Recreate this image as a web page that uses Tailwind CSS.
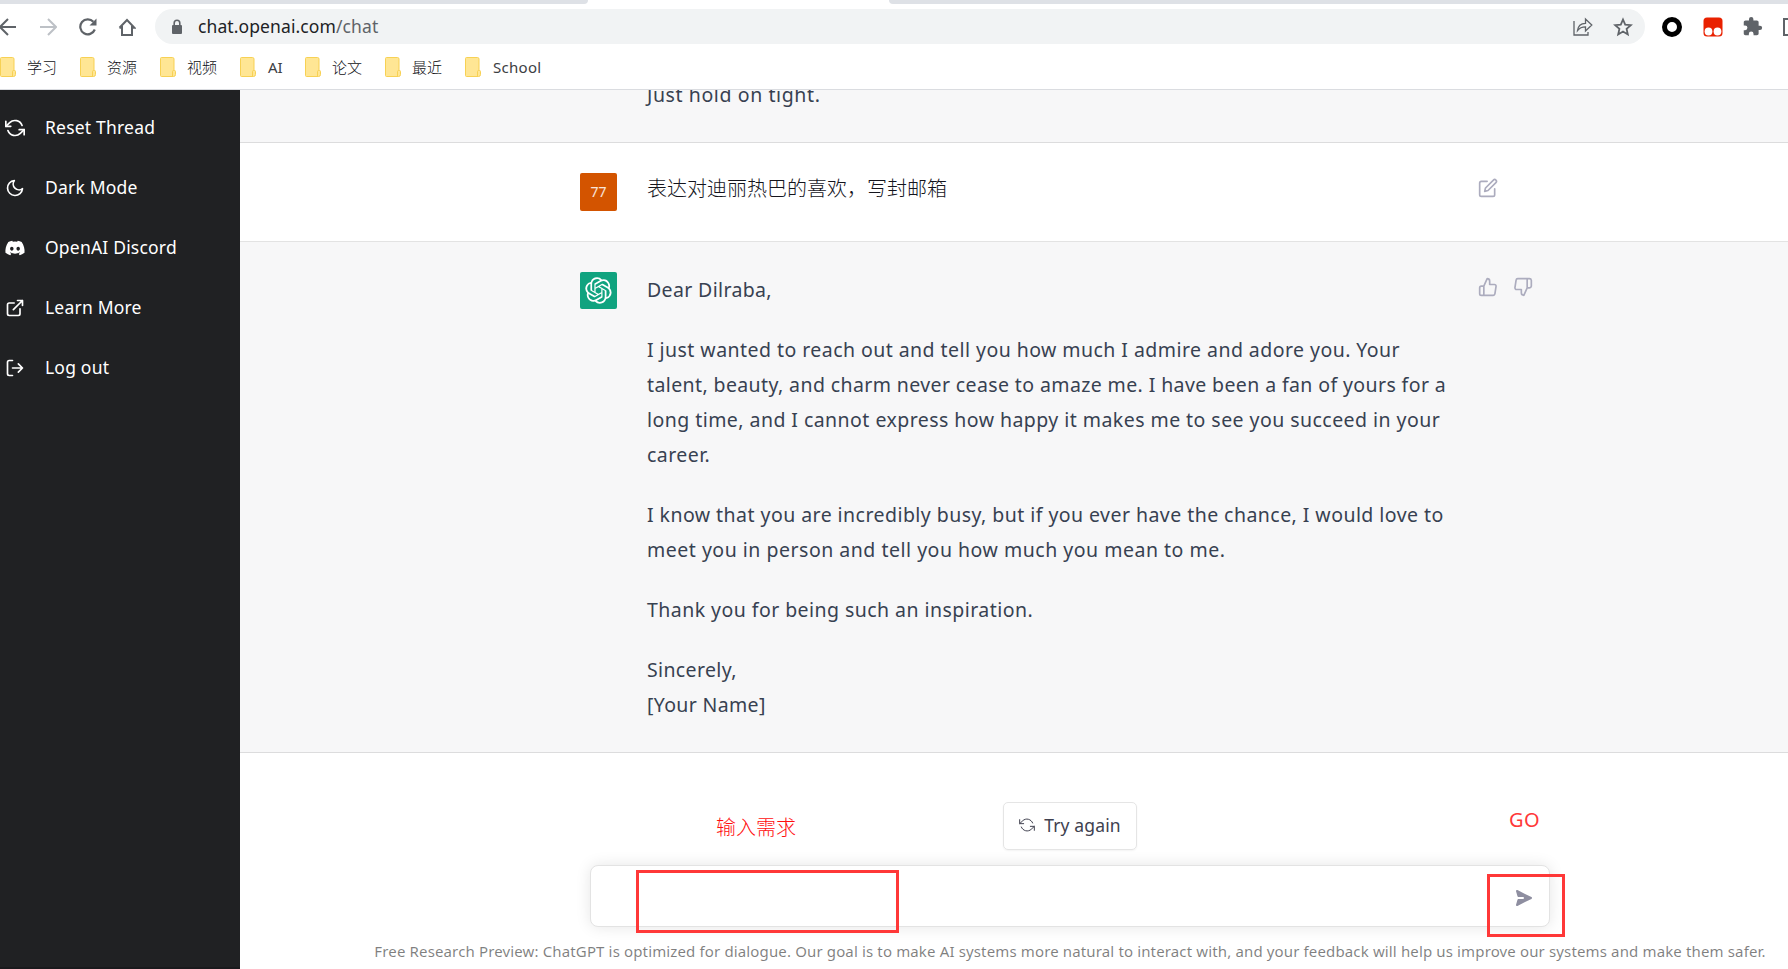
<!doctype html>
<html lang="en">
  <head>
    <meta charset="utf-8" />
    <title>ChatGPT</title>
    <meta name="viewport" content="width=device-width,initial-scale=1" />
    <script src="https://cdn.jsdelivr.net/npm/@tailwindcss/browser@4"></script>
  </head>
  <body class="h-screen overflow-hidden bg-white font-['Noto_Sans','Noto_Sans_CJK_SC',sans-serif]">
    <!-- Icons used more than once -->
    <svg class="hidden">
      <symbol id="refresh" viewBox="0 0 24 24">
        <polyline points="1 4 1 10 7 10" />
        <polyline points="23 20 23 14 17 14" />
        <path d="M20.49 9A9 9 0 0 0 5.64 5.64L1 10m22 4l-4.64 4.36A9 9 0 0 1 3.51 15" />
      </symbol>
      <symbol id="folder" viewBox="0 0 16 20">
        <path d="M1.5 .5h11a1.5 1.5 0 0 1 1.500 1.500v11.500h.5a1 1 0 0 1 1 1v3a2 2 0 0 1-2 2h-12a1 1 0 0 1-1-1v-17a1 1 0 0 1 1-1z" fill="#ffe694" stroke="#f7d154" />
        <path d="M12.500 19v-4.500a1 1 0 0 1 1-1h.5" fill="none" stroke="#f7d154" />
      </symbol>
    </svg>

    <div class="flex h-full flex-col">
      <!-- Browser chrome -->
      <header class="flex h-[90px] shrink-0 flex-col border-b border-[#dadce0]">
        <div class="flex h-1 shrink-0 justify-between">
          <div class="w-[588px] rounded-br-md bg-[#dee1e6]"></div>
          <div class="w-[899px] rounded-bl-md bg-[#dee1e6]"></div>
        </div>
        <div class="mt-[5px] flex h-[35px] shrink-0 items-center">
          <div class="flex w-[155px] shrink-0 items-center">
            <svg class="h-5 w-4" viewBox="0 0 16 20" fill="none" stroke="#5f6368" stroke-width="2"><path d="M16 10H0M8 2L0 10l8 8" /></svg>
            <svg class="ml-[23px] h-5 w-[18px]" viewBox="0 0 18 20" fill="none" stroke="#bdc1c6" stroke-width="2"><path d="M1 10h15M9 2l8 8-8 8" /></svg>
            <svg class="ml-[22px] h-5 w-[18px]" viewBox="0 0 18 20" fill="none" stroke="#5f6368" stroke-width="2.200"><path d="M15.800 12.500A7.500 7.500 0 1 1 14.400 4.800" /><path d="M17.500 1.500v7h-7z" fill="#5f6368" stroke="none" /></svg>
            <svg class="ml-[21px] h-5 w-[18px]" viewBox="0 0 18 20" fill="none" stroke="#5f6368" stroke-width="2"><path d="M4 9v9h10V9M1.500 10.800L9 3l7.500 7.800H14M1.500 10.800H4" /></svg>
          </div>
          <div class="flex h-[35px] w-[1490px] shrink-0 items-center rounded-full bg-[#f1f3f4]">
            <svg class="ml-4 h-4 w-3" viewBox="0 0 12 16"><rect x="1" y="6" width="10" height="9" rx="1" fill="#5f6368" /><path d="M3.200 6V4a2.800 2.800 0 0 1 5.600 0v2" fill="none" stroke="#5f6368" stroke-width="1.600" /></svg>
            <span class="ml-[15px] text-[17.5px] tracking-[0.1px] text-[#202124]">chat.openai.com<span class="text-[#5f6368]">/chat</span></span>
            <svg class="ml-auto h-5 w-5" viewBox="0 0 20 20" fill="none" stroke="#5f6368" stroke-width="1.300"><path d="M1 4v14h14v-3" /><path d="M4.500 13.500C5 9 8 6.500 12.500 6.300V2l6.300 6-6.300 6v-4.200c-3.500 0-6 1-8 3.700z" /></svg>
            <svg class="mr-3 ml-5 h-5 w-5" viewBox="0 0 20 20" fill="none" stroke="#5f6368" stroke-width="1.800"><path d="M10 2.500l2.200 5.200 5.600.5-4.200 3.700 1.200 5.500L10 14.500l-4.800 2.900 1.200-5.500L2.200 8.200l5.600-.5z" /></svg>
          </div>
          <svg class="ml-[17px] h-5 w-5 shrink-0" viewBox="0 0 20 20"><circle cx="10" cy="10" r="7.500" fill="none" stroke="#000" stroke-width="5" /></svg>
          <svg class="ml-[21px] h-5 w-5 shrink-0" viewBox="0 0 20 20"><rect x=".5" y=".5" width="19" height="19" rx="3.500" fill="#e92100" /><circle cx="5.500" cy="14.500" r="3.900" fill="#fff" /><circle cx="14.500" cy="14.500" r="3.900" fill="#fff" /></svg>
          <svg class="ml-[19px] h-[21px] w-[21px] shrink-0" viewBox="0 0 24 24" fill="#5f6368"><path d="M20.500 11H19V7c0-1.100-.9-2-2-2h-4V3.500a2.500 2.500 0 0 0-5 0V5H4c-1.100 0-2 .9-2 2v3.800h1.500a2.700 2.700 0 0 1 0 5.400H2V20c0 1.100.9 2 2 2h3.800v-1.500a2.700 2.700 0 0 1 5.400 0V22H17c1.100 0 2-.9 2-2v-4h1.500a2.500 2.500 0 0 0 0-5z" /></svg>
          <div class="ml-5 h-[18px] w-5 shrink-0 border-2 border-[#5f6368]"></div>
        </div>
        <nav class="flex h-[46px] items-center text-[15px] text-[#3c4043]">
          <svg class="h-5 w-4"><use href="#folder" /></svg><span class="ml-[11px] w-[53px] pt-px font-light text-[#101114]">学习</span>
          <svg class="h-5 w-4"><use href="#folder" /></svg><span class="ml-[11px] w-[53px] pt-px font-light text-[#101114]">资源</span>
          <svg class="h-5 w-4"><use href="#folder" /></svg><span class="ml-[11px] w-[53px] pt-px font-light text-[#101114]">视频</span>
          <svg class="h-5 w-4"><use href="#folder" /></svg><span class="ml-3 w-[37px] pt-px">AI</span>
          <svg class="h-5 w-4"><use href="#folder" /></svg><span class="ml-[11px] w-[53px] pt-px font-light text-[#101114]">论文</span>
          <svg class="h-5 w-4"><use href="#folder" /></svg><span class="ml-[11px] w-[53px] pt-px font-light text-[#101114]">最近</span>
          <svg class="h-5 w-4"><use href="#folder" /></svg><span class="ml-3 pt-px tracking-[0.3px]">School</span>
        </nav>
      </header>

      <div class="flex min-h-0 flex-1">
        <!-- Sidebar -->
        <aside class="flex w-60 shrink-0 flex-col border-b-2 border-[#1a1a1d] bg-[#202123] pt-[7px] text-[17.5px] tracking-[0.2px] text-white">
          <a class="flex h-[60px] items-center gap-5 pl-[5px]">
            <svg class="mt-px h-5 w-5" fill="none" stroke="currentColor" stroke-width="2" stroke-linecap="round" stroke-linejoin="round"><use href="#refresh" /></svg>
            <span>Reset Thread</span>
          </a>
          <a class="flex h-[60px] items-center gap-5 pl-[5px]">
            <svg class="mt-px h-5 w-5" viewBox="0 0 24 24" fill="none" stroke="currentColor" stroke-width="2" stroke-linecap="round" stroke-linejoin="round"><path d="M21 12.790A9 9 0 1 1 11.210 3 7 7 0 0 0 21 12.790z" /></svg>
            <span>Dark Mode</span>
          </a>
          <a class="flex h-[60px] items-center gap-5 pl-[5px]">
            <svg class="mt-px h-5 w-5" viewBox="-.5 0 25 24" fill="currentColor"><path d="M20.317 4.370a19.800 19.800 0 0 0-4.885-1.515.074.074 0 0 0-.079.037c-.21.375-.444.865-.608 1.250a18.300 18.300 0 0 0-5.487 0c-.163-.393-.406-.875-.617-1.250a.077.077 0 0 0-.079-.037A19.700 19.700 0 0 0 3.677 4.370C.533 9.046-.319 13.580.099 18.058c2.084 1.564 4.072 2.479 6.024 3.085.49-.66.95-1.323 1.310-2.022-.65-.35-1.312-.65-1.914-1.125l.5-.3c3.928 1.793 8.180 1.793 12.061 0l.45.3c-.6.450-1.230.75-1.910 1.125.37.7.77 1.360 1.230 2.022 1.960-.606 3.949-1.521 6.033-3.085.5-5.177-.838-9.674-3.566-13.688zM8.020 15.331c-1.182 0-2.157-1.085-2.157-2.419 0-1.333.956-2.419 2.157-2.419 1.210 0 2.176 1.095 2.157 2.419 0 1.334-.956 2.419-2.157 2.419zm7.975 0c-1.183 0-2.157-1.085-2.157-2.419 0-1.333.955-2.419 2.157-2.419 1.210 0 2.176 1.095 2.157 2.419 0 1.334-.946 2.419-2.157 2.419z" /></svg>
            <span>OpenAI Discord</span>
          </a>
          <a class="flex h-[60px] items-center gap-5 pl-[5px]">
            <svg class="mt-px h-5 w-5" viewBox="0 0 24 24" fill="none" stroke="currentColor" stroke-width="2" stroke-linecap="round" stroke-linejoin="round"><path d="M18 13v6a2 2 0 0 1-2 2H5a2 2 0 0 1-2-2V8a2 2 0 0 1 2-2h6M15 3h6v6M10 14L21 3" /></svg>
            <span>Learn More</span>
          </a>
          <a class="flex h-[60px] items-center gap-5 pl-[5px]">
            <svg class="mt-px h-5 w-5" viewBox="0 0 24 24" fill="none" stroke="currentColor" stroke-width="2" stroke-linecap="round" stroke-linejoin="round"><path d="M9 21H5a2 2 0 0 1-2-2V5a2 2 0 0 1 2-2h4M16 17l5-5-5-5M21 12H9" /></svg>
            <span>Log out</span>
          </a>
        </aside>

        <!-- Conversation -->
        <main class="min-w-0 flex-1 overflow-hidden">
          <div class="flex h-full w-[1660px] flex-col text-[19.5px] leading-[35px] whitespace-nowrap text-[#374151]">
            <section class="flex h-[53px] shrink-0 items-end overflow-hidden border-b border-[#dcdcdd] bg-[#f7f7f8] pb-[30px] pl-[407px]">
              <p class="tracking-[0.6px]">Just hold on tight.</p>
            </section>

            <section class="flex h-[99px] shrink-0 border-b border-[#e3e3e3] pt-[30px] pl-[340px]">
              <div class="flex h-[38px] w-[37px] items-center justify-center rounded-xs bg-[#d35400] pb-0.5 text-[14px] text-white/85">77</div>
              <p class="-mt-[2px] ml-[30px] w-[831px] text-[20px] font-light text-[#14141c]">表达对迪丽热巴的喜欢，写封邮箱</p>
              <svg class="mt-[5px] h-5 w-5 text-[#acacbe]" viewBox="0 0 24 24" fill="none" stroke="currentColor" stroke-width="2" stroke-linecap="round" stroke-linejoin="round"><path d="M11 4H4a2 2 0 0 0-2 2v14a2 2 0 0 0 2 2h14a2 2 0 0 0 2-2v-7" /><path d="M18.500 2.500a2.121 2.121 0 0 1 3 3L12 15l-4 1 1-4 9.500-9.500z" /></svg>
            </section>

            <section class="flex h-[511px] shrink-0 border-b border-[#dcdcdd] bg-[#f7f7f8] pt-[30px] pl-[340px]">
              <div class="flex h-[37px] w-[37px] items-center justify-center rounded-xs bg-[#10a37f]">
                <svg class="h-[27px] w-[27px]" viewBox="0 0 41 41" fill="#fff"><path d="M37.532 16.870a9.963 9.963 0 0 0-.856-8.184 10.078 10.078 0 0 0-10.855-4.835A9.964 9.964 0 0 0 18.306.5a10.079 10.079 0 0 0-9.614 6.977 9.967 9.967 0 0 0-6.664 4.834 10.080 10.080 0 0 0 1.240 11.817 9.965 9.965 0 0 0 .856 8.185 10.079 10.079 0 0 0 10.855 4.835 9.965 9.965 0 0 0 7.516 3.350 10.078 10.078 0 0 0 9.617-6.981 9.967 9.967 0 0 0 6.663-4.834 10.079 10.079 0 0 0-1.243-11.813zM22.498 37.886a7.474 7.474 0 0 1-4.799-1.735c.061-.033.168-.091.237-.134l7.964-4.600a1.294 1.294 0 0 0 .655-1.134V19.054l3.366 1.944a.12.12 0 0 1 .066.092v9.299a7.505 7.505 0 0 1-7.490 7.496zM6.392 31.006a7.471 7.471 0 0 1-.894-5.023c.06.036.162.099.237.141l7.964 4.600a1.297 1.297 0 0 0 1.308 0l9.724-5.614v3.888a.12.12 0 0 1-.048.103l-8.051 4.649a7.504 7.504 0 0 1-10.240-2.744zM4.297 13.620A7.469 7.469 0 0 1 8.200 10.333c0 .068-.004.190-.004.274v9.201a1.294 1.294 0 0 0 .654 1.132l9.723 5.614-3.366 1.944a.12.12 0 0 1-.114.010L7.040 23.856a7.504 7.504 0 0 1-2.743-10.237zm27.658 6.437l-9.724-5.615 3.367-1.943a.121.121 0 0 1 .113-.010l8.052 4.648a7.498 7.498 0 0 1-1.158 13.528v-9.476a1.293 1.293 0 0 0-.650-1.132zm3.350-5.043c-.059-.037-.162-.099-.236-.141l-7.965-4.600a1.298 1.298 0 0 0-1.308 0l-9.723 5.614v-3.888a.12.12 0 0 1 .048-.103l8.050-4.645a7.497 7.497 0 0 1 11.135 7.763zm-21.063 6.929l-3.367-1.944a.12.12 0 0 1-.065-.092v-9.299a7.497 7.497 0 0 1 12.293-5.756 6.940 6.940 0 0 0-.236.134l-7.965 4.600a1.294 1.294 0 0 0-.654 1.132l-.006 11.225zm1.829-3.943l4.330-2.501 4.332 2.500v5l-4.331 2.500-4.331-2.500V18z" /></svg>
              </div>
              <div class="ml-[30px] w-[831px] space-y-[25px] tracking-[0.45px]">
                <p class="tracking-[0.35px]">Dear Dilraba,</p>
                <p>
                  I just wanted to reach out and tell you how much I admire and adore you. Your<br />
                  <span class="tracking-[0.39px]">talent, beauty, and charm never cease to amaze me. I have been a fan of yours for a</span><br />
                  long time, and I cannot express how happy it makes me to see you succeed in your<br />
                  career.
                </p>
                <p>
                  I know that you are incredibly busy, but if you ever have the chance, I would love to<br />
                  <span class="tracking-[0.51px]">meet you in person and tell you how much you mean to me.</span>
                </p>
                <p>Thank you for being such an inspiration.</p>
                <p class="tracking-[0.35px]">Sincerely,<br />[Your Name]</p>
              </div>
              <div class="flex gap-[15px] pt-[5px] text-[#acacbe]">
                <svg class="h-5 w-5" viewBox="0 0 24 24" fill="none" stroke="currentColor" stroke-width="2" stroke-linecap="round" stroke-linejoin="round"><path d="M14 9V5a3 3 0 0 0-3-3l-4 9v11h11.280a2 2 0 0 0 2-1.700l1.380-9a2 2 0 0 0-2-2.300zM7 22H4a2 2 0 0 1-2-2v-7a2 2 0 0 1 2-2h3" /></svg>
                <svg class="h-5 w-5" viewBox="0 0 24 24" fill="none" stroke="currentColor" stroke-width="2" stroke-linecap="round" stroke-linejoin="round"><path d="M10 15v4a3 3 0 0 0 3 3l4-9V2H5.720a2 2 0 0 0-2 1.700l-1.380 9a2 2 0 0 0 2 2.300zm7-13h2.670A2.310 2.310 0 0 1 22 4v7a2.310 2.310 0 0 1-2.330 2H17" /></svg>
              </div>
            </section>

            <footer class="relative flex flex-1 flex-col items-center pt-[49px]">
              <button class="flex h-12 w-[134px] items-center justify-center gap-[9px] rounded-[5px] border border-[#e5e5e5] pb-0.5 text-[17.5px] tracking-[0.15px] text-[#40414f] shadow-xs">
                <svg class="h-4 w-4" fill="none" stroke="currentColor" stroke-width="1.500" stroke-linecap="round" stroke-linejoin="round"><use href="#refresh" /></svg>
                Try again
              </button>
              <div class="mt-[15px] flex h-[62px] w-[960px] items-center justify-end rounded-lg border border-[#e3e3e3] bg-white pt-1 pr-[15px] shadow-[0_0_15px_rgba(0,0,0,0.1)]">
                <svg class="h-5 w-5 rotate-90 text-[#8e8ea0]" viewBox="0 0 20 20" fill="currentColor"><path d="M10.894 2.553a1 1 0 0 0-1.788 0l-7 14a1 1 0 0 0 1.169 1.409l5-1.429A1 1 0 0 0 9 15.571V11a1 1 0 1 1 2 0v4.571a1 1 0 0 0 .725.962l5 1.428a1 1 0 0 0 1.170-1.408l-7-14z" /></svg>
              </div>
              <p class="mt-[7px] text-[15px] tracking-[0.14px] text-black/50">Free Research Preview: ChatGPT is optimized for dialogue. Our goal is to make AI systems more natural to interact with, and your feedback will help us improve our systems and make them safer.</p>

              <!-- Red markers laid over the input bar -->
              <div class="absolute top-[57px] left-[476px] text-[20px] font-light text-[#ff0f0f]">输入需求</div>
              <div class="absolute top-[49px] left-[1269px] text-[20px] tracking-[0.5px] text-[#ff3838]">GO</div>
              <div class="absolute top-[117px] left-[396px] h-[63px] w-[263px] border-3 border-[#ff3838]"></div>
              <div class="absolute top-[121px] left-[1247px] h-[63px] w-[78px] border-3 border-[#ff3838]"></div>
            </footer>
          </div>
        </main>
      </div>
    </div>
  </body>
</html>
